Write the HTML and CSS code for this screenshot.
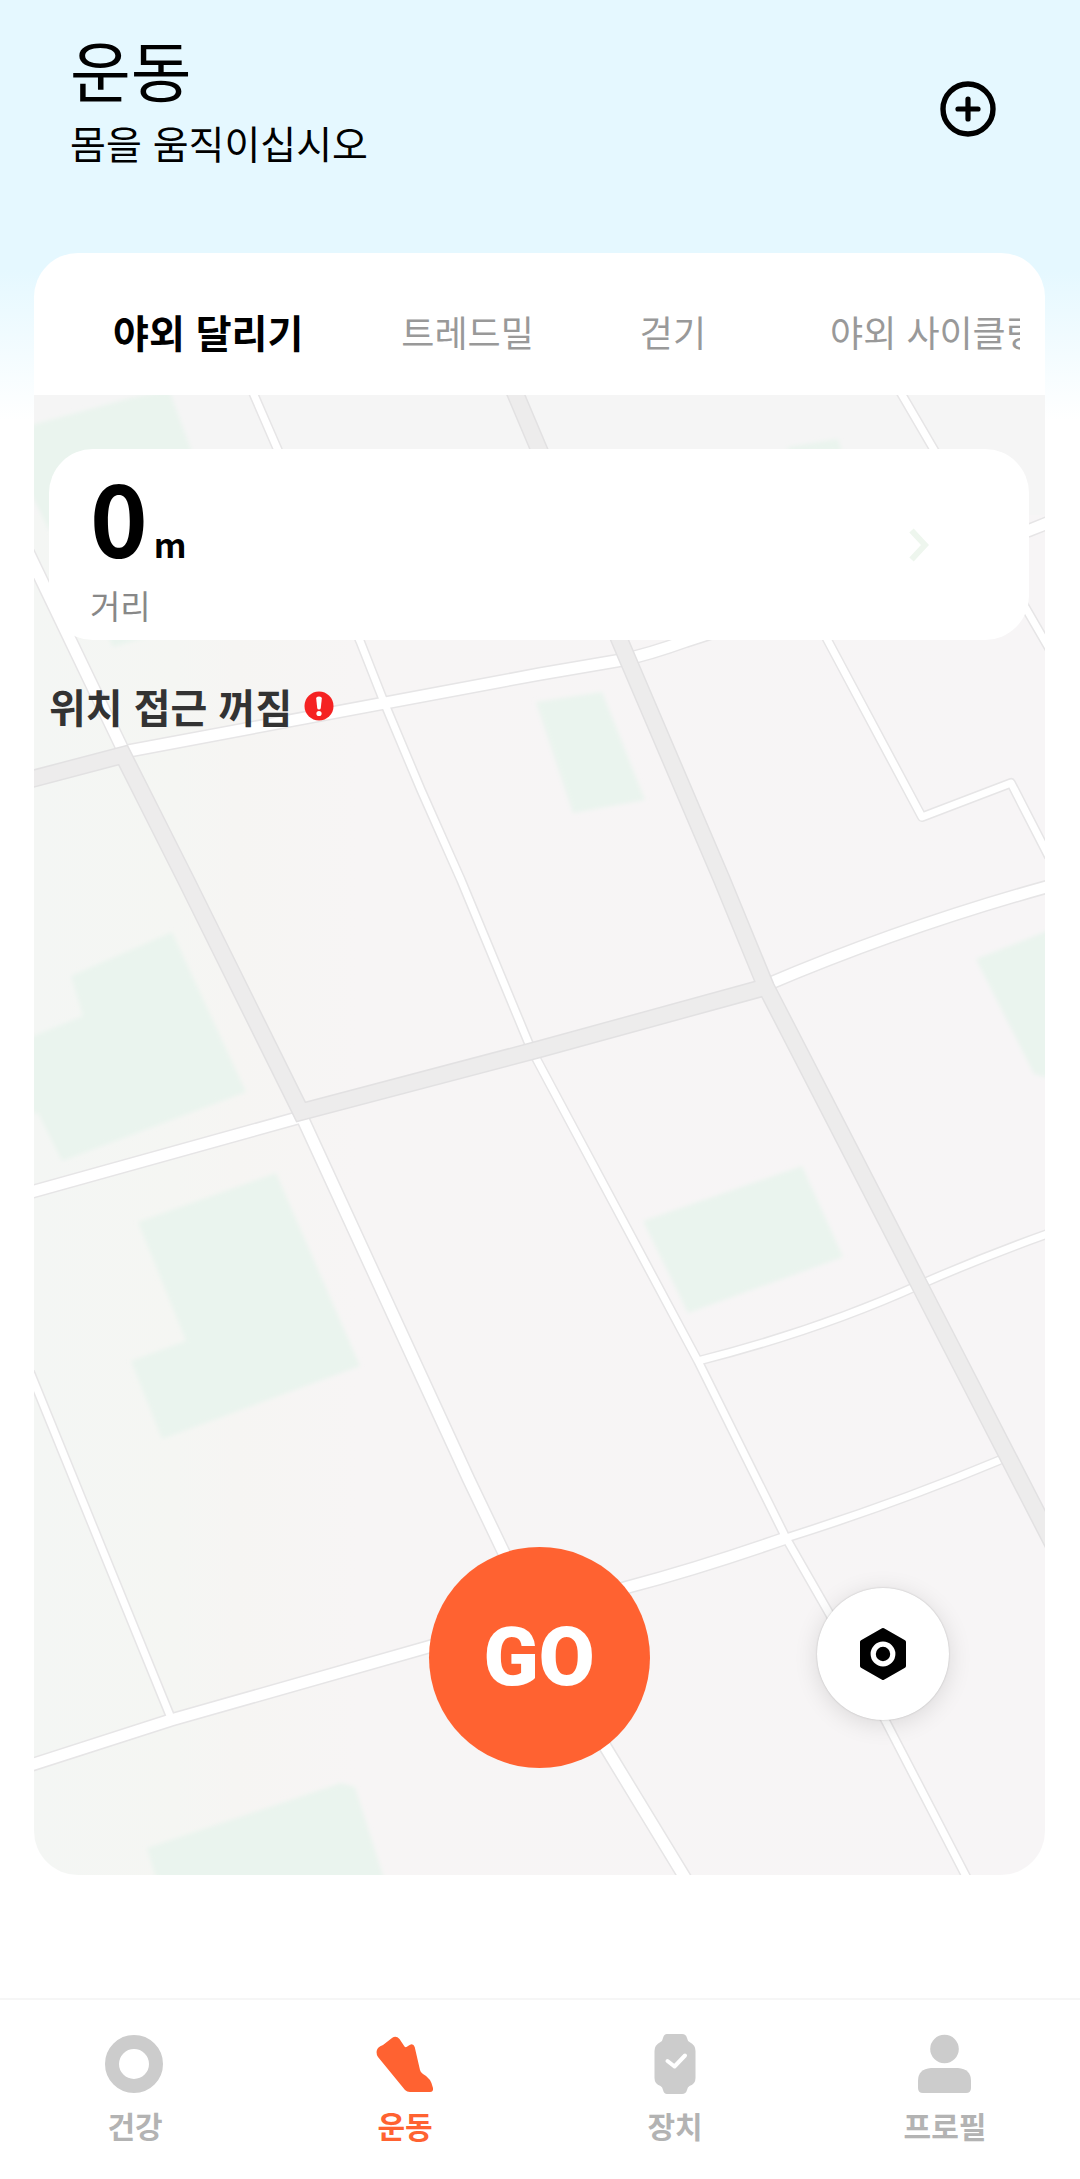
FILE: index.html
```html
<!DOCTYPE html>
<html lang="ko">
<head>
<meta charset="utf-8">
<meta name="viewport" content="width=device-width, initial-scale=1">
<title>운동</title>
<link rel="stylesheet" href="styles.css">
</head>
<body>
<div class="app">
  <header class="header">
    <div class="heading">
      <h1 class="title">운동</h1>
      <p class="subtitle">몸을 움직이십시오</p>
    </div>
    <button class="icon-button" type="button" aria-label="추가">
      <svg class="add-icon" viewBox="0 0 56 56" aria-hidden="true">
        <circle cx="28" cy="28" r="25" fill="none" stroke="#000" stroke-width="5.4"/>
        <path d="M18 28H38M28 18V38" stroke="#000" stroke-width="5.2" stroke-linecap="round"/>
      </svg>
    </button>
  </header>

  <main class="workout">
    <div class="tabs" role="tablist">
      <button class="tab tab-active" type="button" role="tab" aria-selected="true">야외 달리기</button>
      <button class="tab" type="button" role="tab" aria-selected="false">트레드밀</button>
      <button class="tab tab-short" type="button" role="tab" aria-selected="false">걷기</button>
      <button class="tab" type="button" role="tab" aria-selected="false">야외 사이클링</button>
    </div>

    <section class="map" aria-label="지도">
      <svg class="map-canvas" viewBox="34 395 1011 1480" preserveAspectRatio="xMidYMid slice" aria-hidden="true">
        <defs>
          <linearGradient id="land" x1="0" x2="1" y1="0" y2="0">
            <stop offset="0" stop-color="#f4f6f4"/>
            <stop offset="0.14" stop-color="#f5f6f3"/>
            <stop offset="0.2" stop-color="#f6f5f3"/>
            <stop offset="0.32" stop-color="#f7f5f5"/>
            <stop offset="1" stop-color="#f7f5f6"/>
          </linearGradient>
          <filter id="soft" x="-10%" y="-10%" width="120%" height="120%"><feGaussianBlur stdDeviation="2"/></filter>
          <g id="roads-minor" fill="none" stroke-linejoin="round">
            <path d="M251 388L277 448L360 641L384 702L421 790L461 880L529 1044L537 1060L698 1361L786 1538L829 1613L884 1718L970 1884"/>
            <path d="M898 388L933 448L1050 650"/>
            <path d="M775 541L828 641L922 817L1011 783L1049 857"/>
            <path d="M698 1361Q820 1330 919 1285Q985 1256 1050 1233"/>
            <path d="M30 1372L171 1718"/>
            <path d="M786 1538Q900 1502 1000 1460"/>
          </g>
          <g id="roads-main" fill="none" stroke-linejoin="round">
            <path d="M28 552L123 750"/>
            <path d="M123 752L540 674L622 660Q650 654 686 641L1030 530L1050 522"/>
            <path d="M766 985Q905 926 1050 886"/>
            <path d="M28 1193L301 1117"/>
            <path d="M301 1115L469 1480L503 1551L606 1748L690 1886"/>
            <path d="M786 1538Q700 1568 628 1587L428 1647L171 1720L28 1766"/>
          </g>
          <g id="roads-grey" fill="none" stroke-linejoin="miter">
            <path d="M28 780L123 755L186 880L301 1112L540 1049L766 987"/>
            <path d="M513 388L628 660L722 880L766 987L918 1282L1053 1544"/>
          </g>
        </defs>
        <rect x="34" y="395" width="1011" height="1480" fill="url(#land)"/>
        <rect x="34" y="395" width="1011" height="120" fill="#f5f5f5"/>
        <g fill="#eaf4ee" filter="url(#soft)">
          <path d="M24 427L131 398L169 390L192 452L192 470L49 530L24 480Z"/>
          <path d="M105 630L150 636L113 647Z"/>
          <path d="M788 447L838 439L842 452L788 455Z"/>
          <path d="M536 702L602 692L645 800L573 813Z"/>
          <path d="M71 976L172 932L246 1092L62 1161L38 1113L24 1113L24 1040L83 1016Z"/>
          <path d="M138 1222L276 1173L360 1366L162 1439L131 1361L186 1341Z"/>
          <path d="M147 1848L341 1783L355 1787L386 1885L158 1885Z"/>
          <path d="M643 1221L802 1166L843 1257L688 1313Z"/>
          <path d="M976 959L1055 928L1055 1080L1034 1074Z"/>
        </g>
        <use href="#roads-minor" stroke="#e6e5e6" stroke-width="10"/>
        <use href="#roads-main" stroke="#e6e5e6" stroke-width="14"/>
        <use href="#roads-minor" stroke="#fff" stroke-width="7"/>
        <use href="#roads-main" stroke="#fff" stroke-width="11"/>
        <use href="#roads-grey" stroke="#e2e1e2" stroke-width="18"/>
        <use href="#roads-grey" stroke="#edecec" stroke-width="15"/>
      </svg>

      <div class="map-content">
        <a class="distance" href="#history">
          <span class="distance-text">
            <span class="distance-value">0<span class="distance-unit">m</span></span>
            <span class="distance-label">거리</span>
          </span>
          <svg class="chevron" viewBox="0 0 20 34" aria-hidden="true">
            <path d="M2.500 2.500L16 17L2.500 31.500" fill="none" stroke="#eef6ee" stroke-width="6"/>
          </svg>
        </a>

        <p class="location-status">위치 접근 꺼짐
          <svg class="alert-icon" viewBox="0 0 30 30" aria-hidden="true">
            <circle cx="15" cy="15" r="14.500" fill="#f52222"/>
            <path d="M12.200 7.500Q12.200 5.500 15 5.500Q17.800 5.500 17.800 7.500L16.800 17Q16.600 18.500 15 18.500Q13.400 18.500 13.200 17Z" fill="#fff"/>
            <circle cx="15" cy="22.500" r="2.600" fill="#fff"/>
          </svg>
        </p>

        <div class="actions">
          <button class="go" type="button">GO</button>
          <button class="settings" type="button" aria-label="운동 설정">
            <svg class="settings-icon" viewBox="0 0 48 54" aria-hidden="true">
              <path d="M24 3L45 15V39L24 51L3 39V15Z" fill="#000" stroke="#000" stroke-width="4" stroke-linejoin="round"/>
              <circle cx="24" cy="27" r="9.800" fill="none" stroke="#fff" stroke-width="5.200"/>
            </svg>
          </button>
        </div>
      </div>
    </section>
  </main>

  <nav class="nav" aria-label="기본 메뉴">
    <a class="nav-item" href="#health">
      <svg class="nav-icon" viewBox="0 0 60 60" aria-hidden="true"><circle cx="29" cy="30" r="22" fill="none" stroke="currentColor" stroke-width="14"/></svg>
      <span class="nav-label">건강</span>
    </a>
    <a class="nav-item nav-active" href="#workout" aria-current="page">
      <svg class="nav-icon" viewBox="0 0 60 60" aria-hidden="true"><path d="M3 23Q0 18 3 14Q5 12 8 11L17 4Q21 1 24.500 5L29.500 12.500Q31 14 33 12Q38 8 39.700 13L45 36Q45.500 38.500 48 40Q56 44 58 54Q58.500 58 55 58H35Q32 58 30 56Z" fill="currentColor"/></svg>
      <span class="nav-label">운동</span>
    </a>
    <a class="nav-item" href="#device">
      <svg class="nav-icon" viewBox="0 0 60 60" aria-hidden="true"><path d="M22 0H37Q41 0 42 4Q42.500 7 44.500 8Q50.500 11 50.500 17V44Q50.500 50 44.500 52Q42.500 53 42 56Q41 60 37 60H22Q19 60 18 56Q17.500 53 15.500 52Q9.500 50 9.500 44V17Q9.500 11 15.500 8Q17.500 7 18 4Q19 0 22 0Z" fill="currentColor"/><path d="M22.500 27L29.500 32.500L40 21.500" fill="none" stroke="#fff" stroke-width="4" stroke-linecap="round" stroke-linejoin="round"/></svg>
      <span class="nav-label">장치</span>
    </a>
    <a class="nav-item" href="#profile">
      <svg class="nav-icon" viewBox="0 0 60 60" aria-hidden="true"><circle cx="29.500" cy="15" r="14.300" fill="currentColor"/><path d="M16 34H43Q56 35 56 47V54Q56 59 51 59H8Q3 59 3 54V47Q3 35 16 34Z" fill="currentColor"/></svg>
      <span class="nav-label">프로필</span>
    </a>
  </nav>
</div>
</body>
</html>
```
FILE: styles.css
```css
* {
  box-sizing: border-box;
}

body {
  margin: 0;
  background: #fff;
  color: #000;
  font-family: "Noto Sans CJK KR", "Noto Sans", sans-serif;
}

button {
  border: 0;
  padding: 0;
  background: none;
  color: inherit;
  font-family: inherit;
}

a {
  color: inherit;
  text-decoration: none;
}

svg {
  display: block;
}

.app {
  display: flex;
  flex-direction: column;
  min-height: 100vh;
  background: linear-gradient(#e5f8ff 0, #e5f8ff 270px, #fff 420px);
}

.header {
  display: flex;
  align-items: flex-start;
  justify-content: space-between;
  padding: 28px 84px 86px 70px;
}

.title,
.subtitle {
  margin: 0;
  font-weight: 400;
}

.title {
  font-size: 66px;
  line-height: 80px;
}

.subtitle {
  margin-top: 10px;
  font-size: 39px;
  line-height: 49px;
}

.icon-button {
  margin-top: 53px;
}

.add-icon {
  width: 56px;
  height: 56px;
}

.workout {
  display: flex;
  flex: 1;
  flex-direction: column;
  margin: 0 35px 123px 34px;
  overflow: hidden;
  border-radius: 44px;
  background: #fff;
}

.tabs {
  display: flex;
  gap: 98px;
  height: 142px;
  margin-right: 25px;
  padding: 14px 0 0 79px;
  overflow: hidden;
}

.tab {
  flex: none;
  color: #999;
  font-size: 36px;
  line-height: 48px;
}

.tab-active {
  color: #000;
  font-size: 39px;
  font-weight: 700;
}

.tab-short {
  padding: 0 26px 0 8px;
}

.map {
  position: relative;
  display: flex;
  flex: 1;
}

.map-canvas {
  position: absolute;
  inset: 0;
  width: 100%;
  height: 100%;
}

.map-content {
  position: relative;
  display: flex;
  flex: 1;
  flex-direction: column;
  padding: 54px 16px 107px 15px;
}

.distance {
  display: flex;
  align-items: center;
  justify-content: space-between;
  height: 191px;
  padding: 0 100px 0 41px;
  border-radius: 44px;
  background: #fff;
}

.distance-text {
  display: flex;
  flex-direction: column;
}

.distance-value {
  margin-top: 5px;
  font-size: 98px;
  font-weight: 700;
  line-height: 98px;
}

.distance-unit {
  margin-left: 6px;
  font-size: 34px;
}

.distance-label {
  margin-top: -12px;
  color: #888;
  font-size: 33px;
  line-height: 48px;
}

.chevron {
  width: 20px;
  height: 34px;
}

.location-status {
  display: flex;
  align-items: center;
  gap: 12px;
  margin: 42px 0 0;
  color: #333;
  font-size: 40px;
  font-weight: 700;
  line-height: 48px;
}

.alert-icon {
  width: 30px;
  height: 30px;
}

.actions {
  display: grid;
  grid-template-columns: 1fr auto 1fr;
  align-items: center;
  margin-top: auto;
}

.go {
  grid-column: 2;
  width: 221px;
  height: 221px;
  border-radius: 50%;
  background: #ff6231;
  color: #fff;
  font-family: Roboto, "Noto Sans", sans-serif;
  font-size: 81px;
  font-weight: 900;
  line-height: 96px;
}

.settings {
  display: grid;
  place-items: center;
  justify-self: end;
  width: 132px;
  height: 132px;
  margin: 0 80px 8px 0;
  border-radius: 50%;
  background: #fff;
  box-shadow: 0 4px 24px rgba(0, 0, 0, 0.12), 0 0 2px rgba(0, 0, 0, 0.2);
}

.settings-icon {
  width: 48px;
  height: 54px;
}

.nav {
  display: grid;
  grid-template-columns: repeat(4, 1fr);
  padding: 34px 0;
  border-top: 2px solid #f6f6f6;
  background: #fff;
}

.nav-item {
  display: flex;
  flex-direction: column;
  align-items: center;
  gap: 11px;
  color: #ccc;
}

.nav-icon {
  width: 60px;
  height: 60px;
}

.nav-label {
  color: #b3b3b3;
  font-size: 30px;
  font-weight: 700;
  line-height: 40px;
}

.nav-active,
.nav-active .nav-label {
  color: #ff6231;
}
```
